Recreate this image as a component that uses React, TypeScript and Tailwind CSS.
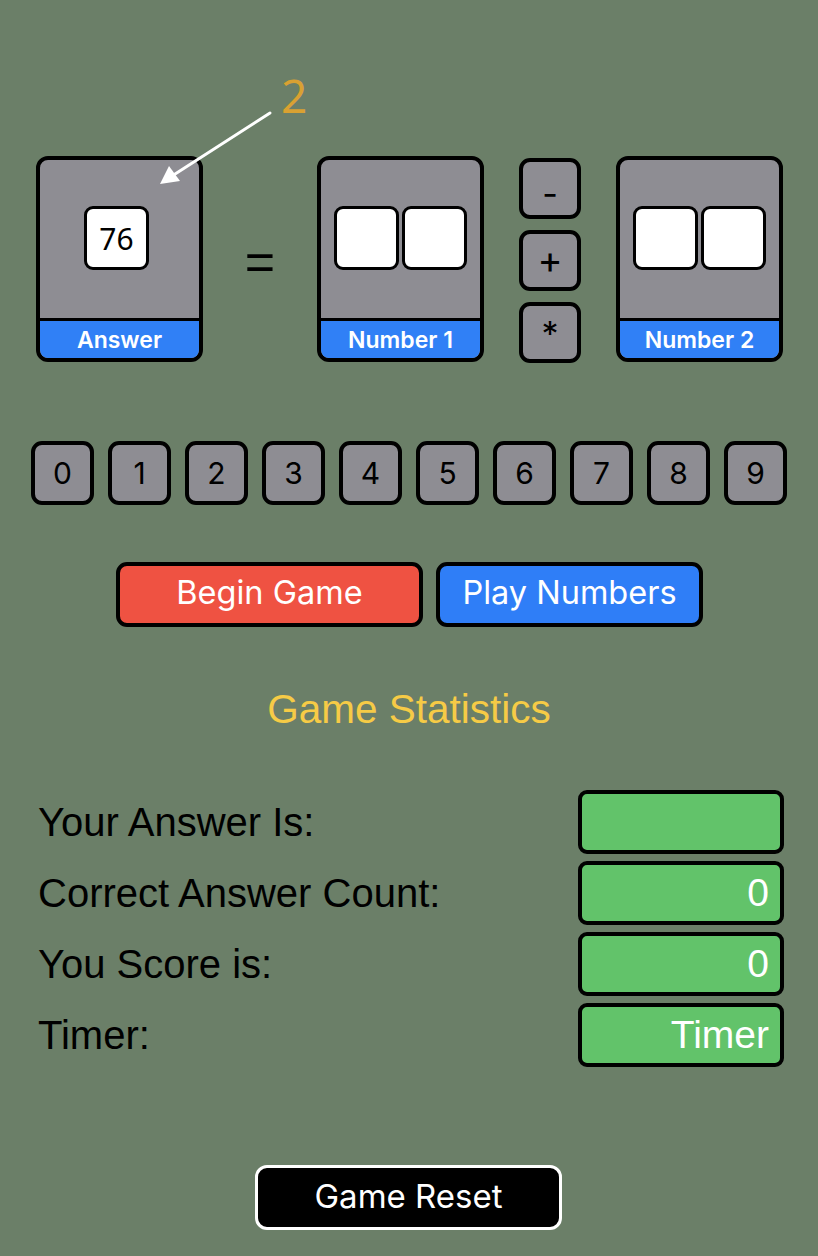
import type { ReactNode } from "react";

const sans = "font-['Inter','Roboto',sans-serif]";
const helv = "font-['Liberation_Sans','Arial',sans-serif]";

function Slot({ value }: { value?: string }) {
  return (
    <div className="flex h-[64px] w-[65px] items-center justify-center rounded-[9px] border-[3px] border-black bg-white text-[30px] text-black">
      {value}
    </div>
  );
}

function Card({ label, children }: { label: string; children: ReactNode }) {
  return (
    <div className="flex h-[206px] w-[167px] shrink-0 flex-col overflow-hidden rounded-[12px] border-4 border-black bg-[#8e8d93]">
      <div className="flex flex-1 items-center justify-center gap-[3px] pb-[2px]">{children}</div>
      <div
        className={`flex h-[40px] items-center justify-center rounded-b-[7px] border-t-[3px] border-black bg-[#3080f6] pt-[1px] text-[23px] font-semibold text-white ${sans}`}
      >
        {label}
      </div>
    </div>
  );
}

function Key({ children, className = "" }: { children: ReactNode; className?: string }) {
  return (
    <button
      type="button"
      className={`flex items-center justify-center rounded-[11px] border-4 border-black bg-[#8e8d93] text-black ${sans} ${className}`}
    >
      {children}
    </button>
  );
}

const stats: [string, string][] = [
  ["Your Answer Is:", ""],
  ["Correct Answer Count:", "0"],
  ["You Score is:", "0"],
  ["Timer:", "Timer"],
];

export default function App() {
  return (
    <div className="relative min-h-[1256px] w-full bg-[#6b7f68] pt-[156px]">
      {/* hint overlay */}
      <span className="absolute left-[281px] top-[72px] font-['Noto_Sans',sans-serif] text-[46px] leading-none text-[#d9a132]">
        2
      </span>
      <svg className="absolute left-[150px] top-[105px]" width="130" height="90" viewBox="0 0 130 90">
        <line x1="120" y1="8" x2="22" y2="71" stroke="white" strokeWidth="3" strokeLinecap="round" />
        <path d="M10 79 L19 61 L30 76 Z" fill="white" />
      </svg>

      <div className="flex items-start pl-[36px]">
        <Card label="Answer">
          <div className="mr-[6px]">
            <Slot value="76" />
          </div>
        </Card>
        <div
          className={`flex h-[206px] w-[114px] items-center justify-center pt-[6px] text-[52px] leading-none text-black ${helv}`}
        >
          =
        </div>
        <Card label="Number 1">
          <Slot />
          <Slot />
        </Card>
        <div className="ml-[35px] mt-[2px] flex w-[62px] flex-col gap-[11px]">
          <Key className="h-[61px] w-[62px] items-start pt-[6px] text-[34px]">-</Key>
          <Key className="h-[61px] w-[62px] pb-[3px] text-[38px]">+</Key>
          <Key className="h-[61px] w-[62px] items-start pt-[2px] text-[34px]">*</Key>
        </div>
        <div className="ml-[35px]">
          <Card label="Number 2">
            <Slot />
            <Slot />
          </Card>
        </div>
      </div>

      <div className="mt-[78px] flex gap-[14px] pl-[31px]">
        {["0", "1", "2", "3", "4", "5", "6", "7", "8", "9"].map((d) => (
          <Key key={d} className="h-[64px] w-[63px] text-[30px]">
            {d}
          </Key>
        ))}
      </div>

      <div className={`mt-[57px] flex gap-[13px] pl-[116px] text-[32.5px] text-white ${sans}`}>
        <button
          type="button"
          className="h-[65px] w-[307px] rounded-[11px] border-4 border-black bg-[#ef5242] pb-[2px]"
        >
          Begin Game
        </button>
        <button
          type="button"
          className="h-[65px] w-[267px] rounded-[11px] border-4 border-black bg-[#2f7ef7] pb-[2px]"
        >
          Play Numbers
        </button>
      </div>

      <h2 className={`mt-[58px] text-center text-[40.5px] leading-[48px] text-[#f6cb46] ${helv}`}>
        Game Statistics
      </h2>

      <div className={`mt-[57px] flex flex-col gap-[7px] pl-[38px] pr-[34px] ${helv}`}>
        {stats.map(([label, value]) => (
          <div key={label} className="flex items-center justify-between">
            <span className="text-[40px] text-black">{label}</span>
            <div className="flex h-[64px] w-[206px] items-center justify-end rounded-[9px] border-4 border-black bg-[#62c36a] pr-[11px] text-[39px] text-white">
              {value}
            </div>
          </div>
        ))}
      </div>

      <div className="mt-[98px] flex justify-center pr-[1px]">
        <button
          type="button"
          className={`h-[65px] w-[307px] rounded-[12px] border-[3px] border-white bg-black pb-[2px] text-[33px] text-white ${sans}`}
        >
          Game Reset
        </button>
      </div>
    </div>
  );
}
